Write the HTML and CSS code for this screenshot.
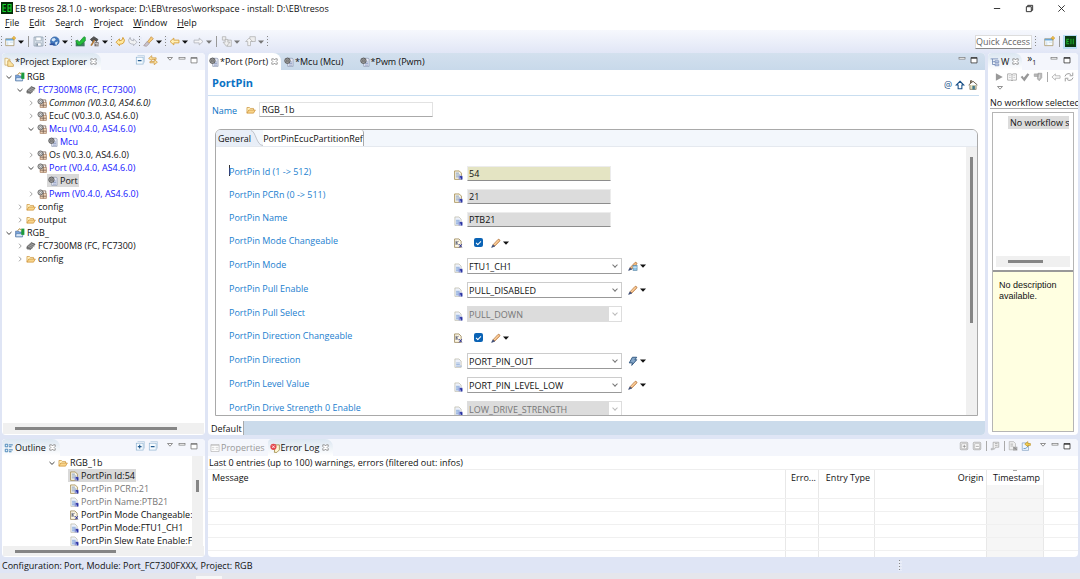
FILE: index.html
```html
<!DOCTYPE html>
<html lang="en">
<head>
<meta charset="utf-8">
<title>EB tresos 28.1.0</title>
<link rel="stylesheet" href="styles.css">
</head>
<body>
<svg class="defs" aria-hidden="true">
  <symbol id="down" viewBox="0 0 6 6"><path d="M0 1.5h6L3 4.8z" fill="currentColor"/></symbol>
  <symbol id="menu-tri" viewBox="0 0 8 8"><path d="M1.5 1.5h5L4 4.2z" fill="#fff" stroke="#777" stroke-width=".8"/></symbol>
  <symbol id="min" viewBox="0 0 8 8"><rect x="1" y="1.5" width="6" height="1.6" fill="#fff" stroke="#777" stroke-width=".7"/></symbol>
  <symbol id="max" viewBox="0 0 8 8"><path d="M1 1.5h6v5.4H1z" fill="#fff" stroke="currentColor" stroke-width=".8"/><path d="M1 2.2h6" stroke="currentColor" stroke-width="1"/></symbol>
  <symbol id="close" viewBox="0 0 10 10"><path d="M2 2h2l1 1.3L6 2h2v1.8L6.800 5 8 6.200V8H6L5 6.700 4 8H2V6.200L3.200 5 2 3.800z" fill="#fff" stroke="#777" stroke-width=".8"/></symbol>
  <symbol id="exp" viewBox="0 0 8 8"><path d="M3 1.700L5.200 4 3 6.300" fill="none" stroke="#999" stroke-width=".9"/></symbol>
  <symbol id="col" viewBox="0 0 8 8"><path d="M1.500 3L4 5.400 6.500 3" fill="none" stroke="#444" stroke-width="1"/></symbol>
  <symbol id="logo" viewBox="0 0 12 12"><rect width="12" height="12" fill="#052b08"/><path d="M5 2.500H2v7h3M2 6h3M7 2.500v7h3v-7zM7 6h3" fill="none" stroke="#16d52c" stroke-width="1.100"/></symbol>
  <symbol id="logodim" viewBox="0 0 12 12"><rect width="12" height="12" fill="#0a3a12"/><path d="M4.500 3.500H2v5h2.500M2 6h2M6.500 3v6M9 3v6" fill="none" stroke="#18b52c" stroke-width="1.100"/></symbol>
  <symbol id="explorer" viewBox="0 0 16 16"><path d="M1.500 13V2h4l1 1.500h3V13z" fill="#fff8dc" stroke="#c79b45"/><path d="M6 15V6h3l1.500 2L15 12v3z" fill="#fbe3a0" stroke="#b98a35"/></symbol>
  <symbol id="project" viewBox="0 0 16 16"><path d="M1 5h5l1 1.500h5V14H1z" fill="#7ba5dc" stroke="#3d6296"/><path d="M2 9h11l-1 5H1z" fill="#d7e6f8" stroke="#547aa9"/><rect x="10" y="1" width="5" height="10" fill="#1c9b3c"/><path d="M4 4l4-3 2 3" stroke="#b58a38" fill="none" stroke-width="1.500"/></symbol>
  <symbol id="chip" viewBox="0 0 16 16"><path d="M1.500 9l7-6.500L14.500 5l-7 8.500-6-1z" fill="#777" stroke="#444"/><path d="M3 8l6 3M5 6l6 3M7 4l6 3M3 12v2.500M6 13v2M10 11v2M13 8v2" stroke="#bbb"/></symbol>
  <symbol id="module" viewBox="0 0 16 16"><path d="M5 7h10v8H5z" fill="#efd5bd" stroke="#976846"/><path d="M10 4v11M5 11.500h10M8 3h6v4" fill="none" stroke="#6d5648" stroke-width="1.200"/><circle cx="5.500" cy="5.500" r="4" fill="#ccc" stroke="#666" stroke-width="1.500"/><circle cx="5.500" cy="5.500" r="1.500" fill="#fff" stroke="#666"/></symbol>
  <symbol id="config" viewBox="0 0 16 16"><path d="M5 2h8l1.500 1v12H6z" fill="#e6e9f5" stroke="#8390aa"/><path d="M8 8h5M8 10.500h5M8 13h5" stroke="#6b7fae"/><circle cx="5.500" cy="6" r="4.300" fill="#aaa" stroke="#555" stroke-width="1.500"/><circle cx="5.500" cy="6" r="1.500" fill="#eee" stroke="#444"/><path d="M2 2.500l7 7M9 2.500l-7 7" stroke="#666" stroke-width=".8"/></symbol>
  <symbol id="folder" viewBox="0 0 16 16"><path d="M1.500 13V4h4l1.500 1.500h5V8" fill="#fff0bd" stroke="#c5862a"/><path d="M1.500 13L4.500 8H15l-3 5z" fill="#f9d58b" stroke="#c5862a"/></symbol>
  <symbol id="doc" viewBox="0 0 16 16"><path d="M3 1.500h6.500L13 5v10H3z" fill="#edf1fa" stroke="#b5b29f"/><path d="M5 6h6v8H5z" fill="#b9cdec"/><path d="M5 7h5M5 9.500h5M5 12h4" stroke="#8eabd8"/><path d="M9 9h6v6H9z" fill="#8d97d8"/><path d="M11 11h3v4" stroke="#1c249a" stroke-width="1.800" fill="none"/></symbol>
  <symbol id="docplain" viewBox="0 0 16 16"><path d="M3 1.500h6.500L13 5v10H3z" fill="#edf1fa" stroke="#b5b29f"/><path d="M5 8h6M5 10.500h6M5 13h9" stroke="#8eabd8" stroke-width="1.300"/></symbol>
  <symbol id="docnum" viewBox="0 0 16 16"><path d="M2.500 1.500h7.500L13.500 5v10h-11z" fill="#f7f3e5" stroke="#a58c50" stroke-width="1.300"/><path d="M4.500 5h5M4.500 8h7M4.500 11h5" stroke="#7390bd" stroke-width="1.300"/><path d="M9 9h6v6H9z" fill="#8d97d8"/><path d="M11 11h3v4" stroke="#1c249a" stroke-width="1.800" fill="none"/></symbol>
  <symbol id="docbool" viewBox="0 0 16 16"><path d="M2.500 1.500h7L13 5v10H2.500z" fill="#fff9e7" stroke="#998558" stroke-width="1.300"/><path d="M5 4.500v6.500M9 4.500L5.500 8 9 11" stroke="#434b69" stroke-width="1.400" fill="none"/><path d="M10 10l4 5M14 10l-4 5" stroke="#1c249a" stroke-width="1.500" fill="none"/></symbol>
  <symbol id="pencil" viewBox="0 0 16 16"><path d="M3 11L11 2.500q2-1.500 3 .5t-.5 2.500L6 13z" fill="#f3bb80" stroke="#a5652d"/><path d="M4.500 11.500L12 3.500" stroke="#ffe1b8"/><path d="M1 15l2-4 3 2z" fill="#34446e" stroke="#34446e"/></symbol>
  <symbol id="pencalc" viewBox="0 0 16 16"><path d="M3 11L11 2.500q2-1.500 3 .5t-.5 2.500L6 13z" fill="#f3bb80" stroke="#a5652d"/><path d="M1 15l2-4 3 2z" fill="#34446e" stroke="#34446e"/><rect x="8" y="7" width="6.500" height="8" fill="#8fc6e8" stroke="#5683a3"/><path d="M8 10h6" stroke="#fff"/></symbol>
  <symbol id="bolt" viewBox="0 0 16 16"><path d="M7 2h7l-3 4h3l-8 9 1-4H2z" fill="#84a6c8" stroke="#2f557f" stroke-width="1.500"/></symbol>
  <symbol id="new" viewBox="0 0 16 16"><path d="M1 4h12v10H1z" fill="#f5fbff" stroke="#a08a55"/><path d="M1 4h12v2.500H1z" fill="#6aa7d8"/><path d="M4 8v5M7 9h5" stroke="#bdd1df"/><path d="M13 0l1 2 2 1-2 1-1 2-1-2-2-1 2-1z" fill="#f6bd31" stroke="#bd8413" stroke-width=".6"/></symbol>
  <symbol id="save" viewBox="0 0 16 16"><path d="M1.500 1.500h13v13h-13z" fill="#dfe7ef" stroke="#8394a5"/><path d="M4 1.500h8V7H4zM4 10h8v4.500H4z" fill="#fff" stroke="#8fa1b2"/><path d="M6 11v3" stroke="#657789" stroke-width="2"/></symbol>
  <symbol id="globe" viewBox="0 0 16 16"><circle cx="8.500" cy="7.500" r="6.200" fill="#4379be" stroke="#24599d"/><path d="M4 4l4-1 2 2-3 3-3-1zM9 9l4-1-2 5-2-1z" fill="#d6e8f8"/><path d="M1 12h7" stroke="#2f529d" stroke-width="2.500"/></symbol>
  <symbol id="verify" viewBox="0 0 16 16"><path d="M1 9h13v6H1z" fill="#3f7962"/><path d="M1 7l3-1 2 3 7-8 2 1v5l-7 6H4z" fill="#24be3b" stroke="#148729"/></symbol>
  <symbol id="hammer" viewBox="0 0 16 16"><path d="M2 5l5-4 6 4-2 3-3-2-3 2z" fill="#555" stroke="#333"/><path d="M8 6L3 14" stroke="#b07838" stroke-width="2.500"/><path d="M8 9h6v6H8z" fill="#716765"/><path d="M9 11h4M10 13h4" stroke="#fff"/></symbol>
  <symbol id="undo" viewBox="0 0 16 16"><path d="M1.500 9l5-5v3q5 0 5-5 4 4 1 8-2 2-6 2v2z" fill="#ffe9a0" stroke="#d3992f" stroke-width="1.300"/></symbol>
  <symbol id="redo" viewBox="0 0 16 16"><path d="M14.500 9l-5-5v3q-5 0-5-5-4 4-1 8 2 2 6 2v2z" fill="#f0f1f3" stroke="#b0b4bd" stroke-width="1.300"/></symbol>
  <symbol id="brush" viewBox="0 0 16 16"><path d="M6 9l6-8 3 3-7 7z" fill="#f7cc7a" stroke="#bd8538"/><path d="M1 14l5-6 3 3-4 4z" fill="#c7c2cf" stroke="#a08f8c"/></symbol>
  <symbol id="back" viewBox="0 0 16 16"><path d="M1.500 8L7 3v3h7.500v4H7v3z" fill="#fff0b7" stroke="#d3992f" stroke-width="1.200"/></symbol>
  <symbol id="fwd" viewBox="0 0 16 16"><path d="M14.500 8L9 3v3H1.500v4H9v3z" fill="#f5f5f7" stroke="#b1b4bb" stroke-width="1.200"/></symbol>
  <symbol id="backgrey" viewBox="0 0 16 16"><path d="M1.500 8L7 3v3h7.500v4H7v3z" fill="#fafafa" stroke="#aaa" stroke-width="1.200"/></symbol>
  <symbol id="annotation" viewBox="0 0 16 16"><path d="M2 1h5v5H2zM9 6h6v9H9z" fill="#eee" stroke="#aaa"/><path d="M6 5h4v4h3l-5 6-5-6h3z" fill="#eee" stroke="#aaa"/></symbol>
  <symbol id="annup" viewBox="0 0 16 16"><path d="M7 1h8v7H7z" fill="#eee" stroke="#aaa"/><path d="M6 3l5 5H8v6H4V8H1z" fill="#f5f5f5" stroke="#aaa"/></symbol>
  <symbol id="collapse" viewBox="0 0 16 16"><path d="M4 1h11v11" fill="none" stroke="#a3c1d8"/><rect x="2" y="3.500" width="11" height="11" fill="#f7fcff" stroke="#85adcd"/><path d="M4.500 9h6" stroke="#225a8f" stroke-width="1.800"/></symbol>
  <symbol id="expand" viewBox="0 0 16 16"><path d="M4 1h11v11" fill="none" stroke="#a3c1d8"/><rect x="2" y="3.500" width="11" height="11" fill="#f7fcff" stroke="#85adcd"/><path d="M4.500 9h6M7.500 6v6" stroke="#225a8f" stroke-width="1.800"/></symbol>
  <symbol id="greyplus" viewBox="0 0 16 16"><rect x="2" y="2" width="12" height="12" rx="1.500" fill="#eee" stroke="#999"/><rect x="4.500" y="4.500" width="8" height="8" fill="#fff" stroke="#aaa"/><path d="M6 8.500h5M8.500 6v5" stroke="#777"/></symbol>
  <symbol id="greyminus" viewBox="0 0 16 16"><rect x="2" y="2" width="12" height="12" rx="1.500" fill="#eee" stroke="#999"/><rect x="4.500" y="4.500" width="8" height="8" fill="#fff" stroke="#aaa"/><path d="M6 8.500h5" stroke="#777"/></symbol>
  <symbol id="link" viewBox="0 0 16 16"><path d="M13 4.500H6V1L1 5.500 6 9V7h7zM3 10.500h7V7l5 4.500-5 4v-3H3z" fill="#fbe2a1" stroke="#c58a2a"/></symbol>
  <symbol id="outline" viewBox="0 0 16 16"><path d="M2 2h4v4H2zM2 10h4v4H2z" fill="#e7f4ff" stroke="#3476ad" stroke-width="1.300"/><path d="M8 3h6M8 6h4M8 11h6M8 14h4" stroke="#3476ad" stroke-width="1.500"/></symbol>
  <symbol id="flow" viewBox="0 0 16 16"><path d="M1 3h12M4 3v9h4M4 7.500h4" stroke="#667fae" fill="none" stroke-width="1.200"/><path d="M8 6h6v3H8zM8 11h6v3H8z" fill="#c8d4ee" stroke="#667fae"/></symbol>
  <symbol id="props" viewBox="0 0 16 16"><path d="M1.500 2.500h13v11h-13z" fill="#fff" stroke="#aaa"/><path d="M1.500 4h13M3 7h4M9 7h4M3 10h4M9 10h4" stroke="#bbb"/></symbol>
  <symbol id="error" viewBox="0 0 16 16"><path d="M8 3h7v8l-4 4H7z" fill="#fff7d4" stroke="#9c8742" stroke-width="1.300"/><circle cx="5.500" cy="6" r="5" fill="#e24a50"/><path d="M3.500 4l4 4M7.500 4l-4 4" stroke="#fff" stroke-width="1.300"/></symbol>
  <symbol id="home" viewBox="0 0 16 16"><path d="M3 8v7h10V8" fill="#e5dfbd" stroke="#695d45"/><path d="M1 8l7-6 7 6M4 5V1h2v3" fill="none" stroke="#6f6250" stroke-width="1.600"/><path d="M7 9h4v6H7z" fill="#447a8c"/></symbol>
  <symbol id="up" viewBox="0 0 16 16"><path d="M8 2l6 6h-3v6H5V8H2z" fill="#fff" stroke="#174f87" stroke-width="1.700"/></symbol>
  <symbol id="play" viewBox="0 0 16 16"><path d="M3 2l11 6-11 6z" fill="#999"/></symbol>
  <symbol id="book" viewBox="0 0 16 16"><path d="M1 3h5l2 1 2-1h5v10h-5l-2 1-2-1H1zM8 4v10" fill="#fff" stroke="#999" stroke-width="1.200"/><path d="M3 6h3M10 6h3M3 9h3M10 9h3" stroke="#aaa"/></symbol>
  <symbol id="tick" viewBox="0 0 16 16"><path d="M1 8l3-2 2 3 6-7 3 2-8 11z" fill="#999"/></symbol>
  <symbol id="drop" viewBox="0 0 16 16"><path d="M2 3h7v4H2zM8 2h6v7l-4 5-3-3z" fill="#bbb" stroke="#999"/><path d="M10 4v6" stroke="#fff"/></symbol>
  <symbol id="refresh" viewBox="0 0 16 16"><path d="M1.500 7Q3 2 8 2.500l3 1.500M14 1v5H9M14.500 9Q13 14 8 13.500L5 12M2 15v-5h5" fill="none" stroke="#999" stroke-width="1.500"/></symbol>
  <symbol id="export" viewBox="0 0 16 16"><path d="M5 2h9v8H9l-2 3H5z" fill="#eee" stroke="#999"/><path d="M8 4h4M8 7h4M1 13h4M3 11v4" stroke="#999"/></symbol>
  <symbol id="greydoc" viewBox="0 0 16 16"><path d="M2 1h7l3 3v10H2z" fill="#eee" stroke="#aaa"/><path d="M4 5h4M4 8h4" stroke="#aaa" stroke-width="1.300"/><path d="M8 9h7v6H8z" fill="#aaa"/><path d="M9 10l5 4" stroke="#777"/></symbol>
  <symbol id="restorelog" viewBox="0 0 16 16"><path d="M2 3h8l2 2v10H2z" fill="#edf6ff" stroke="#7998bb"/><path d="M4 12q6 1 7-5" fill="none" stroke="#6d9dcc" stroke-width="1.500"/><path d="M15 4h-4V1L6 5l5 4V7h4z" fill="#f5cf51" stroke="#b68b1e"/></symbol>
</svg>

<header class="titlebar">
  <svg class="i12"><use href="#logo"/></svg>
  <h1>EB tresos 28.1.0 - workspace: D:\EB\tresos\workspace - install: D:\EB\tresos</h1>
  <button class="win" aria-label="Minimize"><svg viewBox="0 0 10 10"><path d="M1 5h7" stroke="#222" fill="none"/></svg></button>
  <button class="win" aria-label="Restore"><svg viewBox="0 0 10 10"><path d="M1.500 3h5.500v5.500H1.500zM3 3V1.500h5.500V7H7" stroke="#222" fill="none"/></svg></button>
  <button class="win" aria-label="Close"><svg viewBox="0 0 10 10"><path d="M1.500 1.500l7 7M8.500 1.500l-7 7" stroke="#222" fill="none"/></svg></button>
</header>
<nav class="menubar">
  <button><u>F</u>ile</button><button><u>E</u>dit</button><button>Se<u>a</u>rch</button><button><u>P</u>roject</button><button><u>W</u>indow</button><button><u>H</u>elp</button>
</nav>
<div class="toolbar">
  <i class="grip"></i>
  <button class="tool" aria-label="New"><svg><use href="#new"/></svg></button><button class="drop" aria-label="New options"><svg><use href="#down"/></svg></button>
  <i class="sep"></i>
  <button class="tool" aria-label="Save"><svg><use href="#save"/></svg></button>
  <i class="grip"></i>
  <button class="tool" aria-label="Open"><svg><use href="#globe"/></svg></button><button class="drop" aria-label="Open options"><svg><use href="#down"/></svg></button>
  <i class="grip"></i>
  <button class="tool" aria-label="Verify"><svg><use href="#verify"/></svg></button><button class="tool wide" aria-label="Generate"><svg><use href="#hammer"/></svg></button><button class="drop" aria-label="Generate options"><svg><use href="#down"/></svg></button>
  <i class="grip"></i>
  <button class="tool" aria-label="Undo"><svg><use href="#undo"/></svg></button><button class="tool" aria-label="Redo"><svg><use href="#redo"/></svg></button>
  <i class="grip"></i>
  <button class="tool" aria-label="Search"><svg><use href="#brush"/></svg></button><button class="drop" aria-label="Search options"><svg><use href="#down"/></svg></button>
  <i class="grip"></i>
  <button class="tool" aria-label="Back"><svg><use href="#back"/></svg></button><button class="drop" aria-label="Back options"><svg><use href="#down"/></svg></button>
  <button class="tool wide" aria-label="Forward"><svg><use href="#fwd"/></svg></button><button class="drop dim" aria-label="Forward options"><svg><use href="#down"/></svg></button>
  <i class="sep"></i>
  <button class="tool" aria-label="Next annotation"><svg><use href="#annotation"/></svg></button><button class="drop dim" aria-label="Next options"><svg><use href="#down"/></svg></button>
  <button class="tool wide" aria-label="Previous annotation"><svg><use href="#annup"/></svg></button><button class="drop dim" aria-label="Previous options"><svg><use href="#down"/></svg></button>
  <i class="grip"></i>
  <div class="perspective">
    <input class="quick" type="text" aria-label="Quick Access" placeholder="Quick Access">
    <i class="grip"></i>
    <button class="tool open" aria-label="Open perspective"><svg><use href="#new"/></svg></button>
    <i class="sep"></i>
    <button class="tool active" aria-label="EB tresos perspective"><svg><use href="#logodim"/></svg></button>
  </div>
</div>

<main class="workbench">
  <section class="pane explorer">
    <div class="head">
      <div class="tab on"><svg class="ic"><use href="#explorer"/></svg><span>*Project Explorer</span><svg class="x"><use href="#close"/></svg></div>
      <div class="acts"><svg class="ic"><use href="#collapse"/></svg><svg class="ic gap-r"><use href="#link"/></svg><svg class="wb"><use href="#menu-tri"/></svg><svg class="wb"><use href="#min"/></svg><svg class="wb"><use href="#max"/></svg></div>
    </div>
    <ul class="tree">
      <li class="l0"><svg class="tw"><use href="#col"/></svg><svg class="ic"><use href="#project"/></svg><span>RGB</span></li>
      <li class="l1 blue"><svg class="tw"><use href="#col"/></svg><svg class="ic"><use href="#chip"/></svg><span>FC7300M8 (FC, FC7300)</span></li>
      <li class="l2 ital"><svg class="tw"><use href="#exp"/></svg><svg class="ic"><use href="#module"/></svg><span>Common (V0.3.0, AS4.6.0)</span></li>
      <li class="l2"><svg class="tw"><use href="#exp"/></svg><svg class="ic"><use href="#module"/></svg><span>EcuC (V0.3.0, AS4.6.0)</span></li>
      <li class="l2 blue"><svg class="tw"><use href="#col"/></svg><svg class="ic"><use href="#module"/></svg><span>Mcu (V0.4.0, AS4.6.0)</span></li>
      <li class="l3 blue"><span class="node"><svg class="ic"><use href="#config"/></svg><span>Mcu</span></span></li>
      <li class="l2"><svg class="tw"><use href="#exp"/></svg><svg class="ic"><use href="#module"/></svg><span>Os (V0.3.0, AS4.6.0)</span></li>
      <li class="l2 blue"><svg class="tw"><use href="#col"/></svg><svg class="ic"><use href="#module"/></svg><span>Port (V0.4.0, AS4.6.0)</span></li>
      <li class="l3"><span class="node sel"><svg class="ic"><use href="#config"/></svg><span>Port</span></span></li>
      <li class="l2 blue"><svg class="tw"><use href="#exp"/></svg><svg class="ic"><use href="#module"/></svg><span>Pwm (V0.4.0, AS4.6.0)</span></li>
      <li class="l1"><svg class="tw"><use href="#exp"/></svg><svg class="ic"><use href="#folder"/></svg><span>config</span></li>
      <li class="l1"><svg class="tw"><use href="#exp"/></svg><svg class="ic"><use href="#folder"/></svg><span>output</span></li>
      <li class="l0"><svg class="tw"><use href="#col"/></svg><svg class="ic"><use href="#project"/></svg><span>RGB_</span></li>
      <li class="l1"><svg class="tw"><use href="#exp"/></svg><svg class="ic"><use href="#chip"/></svg><span>FC7300M8 (FC, FC7300)</span></li>
      <li class="l1"><svg class="tw"><use href="#exp"/></svg><svg class="ic"><use href="#folder"/></svg><span>config</span></li>
    </ul>
    <div class="hbar"><i class="long"></i></div>
  </section>

  <section class="pane editor">
    <div class="head edhead">
      <div class="tab on"><svg class="ic"><use href="#config"/></svg><span>*Port (Port)</span><svg class="x"><use href="#close"/></svg></div>
      <div class="tab second"><svg class="ic"><use href="#config"/></svg><span>*Mcu (Mcu)</span></div>
      <div class="tab"><svg class="ic"><use href="#config"/></svg><span>*Pwm (Pwm)</span></div>
      <div class="acts"><svg class="wb"><use href="#min"/></svg><svg class="wb dark"><use href="#max"/></svg></div>
    </div>
    <div class="formhead">
      <h2>PortPin</h2>
      <span class="at">@</span><svg class="ic"><use href="#up"/></svg><svg class="ic"><use href="#home"/></svg>
    </div>
    <div class="name">
      <label for="name">Name</label><svg class="ic"><use href="#folder"/></svg><input id="name" type="text" value="RGB_1b">
    </div>
    <div class="folder">
      <div class="ftabs">
        <button class="ft on">General</button><svg class="curve" viewBox="0 0 20 16" preserveAspectRatio="none"><path d="M0 .5C8 1 9 15.500 20 15.500L0 16z" fill="#e8eef7"/><path d="M0 .5C8 1 9 15.500 20 15.500" fill="none" stroke="#b5b8be"/></svg><button class="ft part">PortPinEcucPartitionRef</button>
      </div>
      <div class="fbody">
        <div class="fields">
          <div class="row t"><label for="f1" class="caret">PortPin Id (1 -&gt; 512)</label><svg class="ic"><use href="#docnum"/></svg><input id="f1" class="olive" type="text" value="54"></div>
          <div class="row t"><label for="f2">PortPin PCRn (0 -&gt; 511)</label><svg class="ic"><use href="#docnum"/></svg><input id="f2" type="text" value="21" readonly></div>
          <div class="row t"><label for="f3">PortPin Name</label><svg class="ic"><use href="#doc"/></svg><input id="f3" type="text" value="PTB21" readonly></div>
          <div class="row t check"><label for="f4">PortPin Mode Changeable</label><svg class="ic"><use href="#docbool"/></svg><input id="f4" type="checkbox" checked><button class="edit" aria-label="Edit mode changeable"><svg class="ic"><use href="#pencil"/></svg><svg class="dn"><use href="#down"/></svg></button></div>
          <div class="row"><label for="f5">PortPin Mode</label><svg class="ic"><use href="#doc"/></svg><span class="combo"><select id="f5"><option>FTU1_CH1</option></select></span><button class="edit" aria-label="Edit mode"><svg class="ic"><use href="#pencalc"/></svg><svg class="dn"><use href="#down"/></svg></button></div>
          <div class="row"><label for="f6">PortPin Pull Enable</label><svg class="ic"><use href="#doc"/></svg><span class="combo"><select id="f6"><option>PULL_DISABLED</option></select></span><button class="edit" aria-label="Edit pull enable"><svg class="ic"><use href="#pencil"/></svg><svg class="dn"><use href="#down"/></svg></button></div>
          <div class="row"><label for="f7">PortPin Pull Select</label><svg class="ic"><use href="#doc"/></svg><span class="combo off"><select id="f7" disabled><option>PULL_DOWN</option></select></span></div>
          <div class="row t check"><label for="f8">PortPin Direction Changeable</label><svg class="ic"><use href="#docbool"/></svg><input id="f8" type="checkbox" checked><button class="edit" aria-label="Edit direction changeable"><svg class="ic"><use href="#pencil"/></svg><svg class="dn"><use href="#down"/></svg></button></div>
          <div class="row"><label for="f9">PortPin Direction</label><svg class="ic"><use href="#docplain"/></svg><span class="combo"><select id="f9"><option>PORT_PIN_OUT</option></select></span><button class="edit" aria-label="Edit direction"><svg class="ic"><use href="#bolt"/></svg><svg class="dn"><use href="#down"/></svg></button></div>
          <div class="row"><label for="f10">PortPin Level Value</label><svg class="ic"><use href="#doc"/></svg><span class="combo"><select id="f10"><option>PORT_PIN_LEVEL_LOW</option></select></span><button class="edit" aria-label="Edit level value"><svg class="ic"><use href="#pencil"/></svg><svg class="dn"><use href="#down"/></svg></button></div>
          <div class="row"><label for="f11">PortPin Drive Strength 0 Enable</label><svg class="ic"><use href="#doc"/></svg><span class="combo off"><select id="f11" disabled><option>LOW_DRIVE_STRENGTH</option></select></span></div>
        </div>
        <div class="vbar"><i></i></div>
      </div>
    </div>
    <div class="pages"><button>Default</button></div>
  </section>

  <section class="pane workflow">
    <div class="head">
      <div class="tab on"><svg class="ic"><use href="#flow"/></svg><span>W</span><svg class="x"><use href="#close"/></svg></div>
      <span class="more">»<sub>1</sub></span>
      <div class="acts"><svg class="wb"><use href="#min"/></svg><svg class="wb dark"><use href="#max"/></svg></div>
    </div>
    <div class="wtools"><svg class="ic"><use href="#play"/></svg><svg class="ic"><use href="#book"/></svg><svg class="ic"><use href="#tick"/></svg><svg class="ic"><use href="#drop"/></svg><i class="line"></i><svg class="ic"><use href="#backgrey"/></svg><svg class="ic"><use href="#refresh"/></svg></div>
    <svg class="wb wmenu"><use href="#menu-tri"/></svg>
    <p class="wlabel">No workflow selected</p>
    <div class="wbox">
      <div class="wtree"><span>No workflow selected</span></div>
      <div class="hbar"><i></i></div>
      <p class="desc">No description available.</p>
    </div>
  </section>

  <section class="pane outline">
    <div class="head">
      <div class="tab on"><svg class="ic"><use href="#outline"/></svg><span>Outline</span><svg class="x"><use href="#close"/></svg></div>
      <div class="acts"><svg class="ic"><use href="#expand"/></svg><svg class="ic gap-r"><use href="#collapse"/></svg><svg class="wb"><use href="#menu-tri"/></svg><svg class="wb"><use href="#min"/></svg><svg class="wb"><use href="#max"/></svg></div>
    </div>
    <div class="obody">
      <ul class="tree">
        <li class="o0"><svg class="tw"><use href="#col"/></svg><svg class="ic"><use href="#folder"/></svg><span>RGB_1b</span></li>
        <li class="o1"><span class="node sel"><svg class="ic"><use href="#docnum"/></svg><span>PortPin Id:54</span></span></li>
        <li class="o1 grey"><span class="node"><svg class="ic"><use href="#docnum"/></svg><span>PortPin PCRn:21</span></span></li>
        <li class="o1 grey"><span class="node"><svg class="ic"><use href="#doc"/></svg><span>PortPin Name:PTB21</span></span></li>
        <li class="o1"><span class="node"><svg class="ic"><use href="#docbool"/></svg><span>PortPin Mode Changeable:</span></span></li>
        <li class="o1"><span class="node"><svg class="ic"><use href="#doc"/></svg><span>PortPin Mode:FTU1_CH1</span></span></li>
        <li class="o1"><span class="node"><svg class="ic"><use href="#doc"/></svg><span>PortPin Slew Rate Enable:FA</span></span></li>
      </ul>
      <div class="ovbar"><i></i></div>
    </div>
    <div class="hbar"><i class="mid"></i></div>
  </section>

  <section class="pane log">
    <div class="head">
      <div class="tab faded"><svg class="ic"><use href="#props"/></svg><span>Properties</span></div>
      <div class="tab on"><svg class="ic"><use href="#error"/></svg><span>Error Log</span><svg class="x"><use href="#close"/></svg></div>
      <div class="acts"><svg class="ic"><use href="#greyplus"/></svg><svg class="ic"><use href="#greyminus"/></svg><i class="line"></i><svg class="ic"><use href="#export"/></svg><i class="line"></i><svg class="ic"><use href="#greydoc"/></svg><svg class="ic gap-r"><use href="#restorelog"/></svg><svg class="wb"><use href="#menu-tri"/></svg><svg class="wb"><use href="#min"/></svg><svg class="wb dark"><use href="#max"/></svg></div>
    </div>
    <p class="summary">Last 0 entries (up to 100) warnings, errors (filtered out: infos)</p>
    <table>
      <colgroup><col><col class="c2"><col class="c3"><col class="c4"><col class="c5"><col class="c6"></colgroup>
      <thead><tr><th>Message</th><th>Erro...</th><th>Entry Type</th><th class="right">Origin</th><th class="sorted">Timestamp</th><th></th></tr></thead>
      <tbody>
        <tr><td></td><td></td><td></td><td></td><td></td><td></td></tr>
        <tr><td></td><td></td><td></td><td></td><td></td><td></td></tr>
        <tr><td></td><td></td><td></td><td></td><td></td><td></td></tr>
        <tr><td></td><td></td><td></td><td></td><td></td><td></td></tr>
        <tr><td></td><td></td><td></td><td></td><td></td><td></td></tr>
        <tr><td></td><td></td><td></td><td></td><td></td><td></td></tr>
      </tbody>
    </table>
  </section>
</main>
<footer class="status"><span>Configuration: Port, Module: Port_FC7300FXXX, Project: RGB</span><i class="grip"></i></footer>
<div class="taskbar"><i></i></div>
</body>
</html>
```

FILE: styles.css
```css
* { box-sizing: border-box; }
body {
  margin: 0;
  height: 100vh;
  display: flex;
  flex-direction: column;
  overflow: hidden;
  background: #dfe5f5;
  color: #111;
  font: 9px/13px "Open Sans", "Noto Sans", sans-serif;
}
h1, h2, p, ul { margin: 0; padding: 0; font-size: inherit; font-weight: normal; }
ul { list-style: none; }
button, input, select { font: inherit; color: inherit; margin: 0; padding: 0; border: 0; background: none; }
svg { flex: none; display: block; }
.defs { position: absolute; width: 0; height: 0; }
.ic { width: 10px; height: 10px; }
.x { width: 9px; height: 9px; }
.wb { width: 8px; height: 8px; color: #777; }
.dark { color: #333; }
.tw { width: 8px; height: 8px; margin-right: 2px; }
.i12 { width: 12px; height: 12px; }

.titlebar { display: flex; align-items: center; height: 16px; flex: none; background: #fff; padding: 0 9px 0 1px; gap: 2px; }
.titlebar h1 { flex: 1; white-space: nowrap; }
.win { width: 20px; height: 14px; margin-left: 10px; display: flex; align-items: center; justify-content: center; }
.win svg { width: 9px; height: 9px; }
.menubar { display: flex; gap: 10px; height: 14px; flex: none; background: #fff; padding-left: 5px; }
.menubar button { line-height: 14px; }
.toolbar { display: flex; align-items: center; height: 23px; flex: none; background: linear-gradient(#f6f8fd, #e1e6f6); }
.grip { flex: none; width: 4px; height: 11px; background: repeating-linear-gradient(transparent 0 1px, #e9edf8 1px 3px), linear-gradient(90deg, transparent 1px, #888 1px 2px, transparent 2px); }
.sep { flex: none; width: 6px; height: 11px; background: linear-gradient(90deg, transparent 2px, #999 2px, #999 3px, transparent 3px); }
.tool { width: 12px; height: 14px; display: flex; align-items: center; justify-content: center; flex: none; }
.tool svg { width: 11px; height: 11px; }
.tool.wide { margin-left: 2px; }
.drop { width: 10px; height: 14px; display: flex; align-items: center; justify-content: center; color: #111; }
.drop svg { width: 6px; height: 6px; }
.drop.dim { color: #777; }
.perspective { margin-left: auto; display: flex; align-items: center; gap: 2px; padding-right: 3px; }
.quick { width: 57px; height: 14px; background: #fff; border: 1px solid #ddd; border-bottom-color: #888; padding: 0; }
.quick::placeholder { color: #666; opacity: 1; }
.perspective .sep { width: 4px; }
.tool.open { margin-left: 3px; }
.tool.active { width: 14px; background: #b9dcf5; }

.workbench { flex: 1; min-height: 0; display: grid; grid-template-columns: 203px minmax(0, 1fr) 90px; grid-template-rows: minmax(0, 1fr) 118px; gap: 4px 3px; padding: 0 2px 0 2px; }
.pane { background: #fff; border-radius: 4px; min-width: 0; min-height: 0; overflow: hidden; display: flex; flex-direction: column; }
.log { grid-column: 2 / 4; }
.head { display: flex; height: 17px; flex: none; background: #f4f6fc; }
.tab { display: flex; align-items: center; gap: 1px; padding: 0 3px 0 2px; white-space: nowrap; border-radius: 4px 8px 0 0; }
.tab .x { margin-left: 1px; }
.tab.on { background: linear-gradient(#dbe6f1, #fff); }
.acts { margin-left: auto; display: flex; align-items: center; gap: 4px; padding: 0 7px 3px 0; }
.gap-r { margin-right: 4px; }
.acts .ic { margin-left: -1px; }

.tree { flex: 1; min-height: 0; overflow: hidden; }
.tree li { height: 13px; display: flex; align-items: center; white-space: nowrap; }
.tree .ic { margin-right: 2px; }
.l0 { padding-left: 3px; }
.l1 { padding-left: 14px; }
.l2 { padding-left: 25px; }
.l3 { padding-left: 45px; }
.o0 { padding-left: 46px; }
.o1 { padding-left: 66px; }
.node { display: flex; align-items: center; padding: 0 1px; }
.sel { background: #d9d9d9; }
.blue { color: #1414ff; }
.ital { font-style: italic; }
.grey { color: #777; }
.hbar { flex: none; height: 11px; margin: 0 1px 1px; background: #f0f0f0; display: flex; align-items: center; padding-left: 12px; }
.hbar i { width: 35px; height: 3px; background: #858585; }
.hbar .long { width: 162px; }
.hbar .mid { width: 101px; }

.editor .head { background: linear-gradient(#d3e0ee, #c8d9ea); }
.editor .tab.on { background: #fff; padding-right: 2px; }
.editor .tab { padding-left: 1px; }
.editor .second { padding-right: 15px; padding-left: 3px; }
.formhead { display: flex; align-items: center; gap: 3px; height: 26px; flex: none; padding: 0 1px 0 4px; border-bottom: 1px solid #c9def0; margin-right: 6px; }
.formhead h2 { flex: 1; color: #0b72c4; font-size: 11px; font-weight: bold; }
.formhead .ic { margin-top: 5px; }
.at { color: #174f87; padding-top: 4px; }
.name { display: flex; align-items: center; height: 28px; flex: none; padding-left: 4px; color: #0b72c4; }
.name label { width: 34px; }
.name input { color: #111; width: 174px; height: 15px; margin: 0 0 2px 3px; padding-left: 2px; border: 1px solid #e2e2e2; border-bottom-color: #aaa; }
.folder { flex: 1; min-height: 0; margin: 5px 7px 0 7px; border: 1px solid #a9a9a9; border-radius: 6px 6px 0 0; display: flex; flex-direction: column; overflow: hidden; }
.ftabs { display: flex; height: 17px; flex: none; background: #f3f7fc; border-bottom: 1px solid #e5e9ef; }
.ft { padding: 0 0 0 2px; white-space: nowrap; }
.ft.on { background: #e8eef7; }
.curve { width: 12px; height: 16px; }
.ft.part { padding: 0; border-right: 1px solid #aaa; border-radius: 0 3px 0 0; background: #fff; }
.fbody { flex: 1; min-height: 0; display: flex; overflow: hidden; }
.fields { flex: 1; padding: 15px 0 0 13px; }
.row { display: flex; align-items: center; height: 24px; }
.row.t { height: 23px; }
.row label { width: 224px; padding-bottom: 4px; color: #1c80cf; }
.row label.caret { background: linear-gradient(#333, #333) 0 0 / 1px 11px no-repeat; }
.row > .ic { margin: 3px 4px 0 0; }
.row.check > .ic { margin-top: 0; }
.row input[type="text"] { width: 144px; height: 15px; padding-left: 1px; background: #dcdcdc; border: 1px solid #ececec; border-bottom-color: #8d8d8d; }
.row input[type="text"].olive { background: #e4e4c3; }
.row input[type="checkbox"] { appearance: none; width: 9px; height: 9px; margin: 0 8px 0 7px; border-radius: 2px; background: #0a63b5; display: grid; place-items: center; }
.row input[type="checkbox"]::after { content: ""; width: 4px; height: 2px; border: solid #fff; border-width: 0 0 1px 1px; rotate: -45deg; }
.combo { position: relative; display: flex; width: 155px; height: 16px; margin-right: 6px; border: 1px solid #ccc; border-bottom-color: #999; }
.combo select { appearance: none; width: 100%; padding-left: 1px; }
.combo::after { content: ""; position: absolute; right: 4px; top: 4px; width: 3px; height: 3px; border: solid #777; border-width: 0 1px 1px 0; rotate: 45deg; }
.combo.off { border-color: #ddd; }
.combo.off select { color: #777; opacity: 1; background: #dcdcdc; border-right: 12px solid #fff; }
.combo.off::after { border-color: #bbb; }
.edit { display: flex; align-items: center; gap: 2px; }
.dn { width: 6px; height: 6px; color: #111; }
.vbar { width: 11px; background: #f0f0f0; padding: 10px 4px 0; }
.vbar i { display: block; height: 166px; width: 3px; background: #858585; }
.pages { flex: none; height: 14px; margin-top: 5px; background: #cbdbeb; display: flex; }
.pages button { background: #fff; padding: 0 1px 0 3px; border-right: 1px solid #aaa; }

.workflow .tab { padding-right: 2px; }
.more { padding-left: 5px; font-size: 10px; line-height: 11px; }
.more sub { font-size: 7px; line-height: 1px; }
.workflow .acts { padding-right: 7px; gap: 5px; }
.wtools { display: flex; justify-content: space-between; padding: 2px 4px 0 6px; }
.line { width: 1px; height: 10px; background: #aaa; }
.wmenu { margin: 3px 0 0 8px; }
.wlabel { flex: none; margin: 3px 0 3px 2px; white-space: nowrap; overflow: hidden; height: 13px; border-bottom: 1px solid #aaa; }
.wbox { flex: 1; min-height: 0; margin: 0 4px 3px; border: 1px solid #b5b5b5; display: flex; flex-direction: column; }
.wtree { flex: none; height: 143px; padding: 3px 4px 0 15px; }
.wtree span { display: block; overflow: hidden; white-space: nowrap; background: #dcdcdc; padding-left: 2px; }
.workflow .hbar { margin: 0 3px 3px; }
.desc { flex: 1; background: #ffffe1; border-top: 2px solid #999; padding: 8px 6px; font: 9px/11px "Liberation Sans", sans-serif; }

.obody { flex: 1; min-height: 0; display: flex; }
.outline .hbar { height: 10px; }
.outline .tree { width: 190px; flex: none; }
.ovbar { width: 11px; background: #f0f0f0; padding: 24px 4px 0; }
.ovbar i { display: block; width: 3px; height: 12px; background: #858585; }
.faded { color: #999; }
.log .tab { padding-right: 3px; }
.summary { flex: none; padding-left: 1px; height: 14px; border-bottom: 1px solid #eee; }
table { width: 100%; table-layout: fixed; border-collapse: collapse; }
.c2 { width: 33px; }
.c3 { width: 56px; }
.c4 { width: 112px; }
.c5 { width: 57px; background: #f6f6f6; }
.c6 { width: 35px; }
th { height: 15px; padding: 0; padding-left: 4px; font-weight: normal; text-align: center; white-space: nowrap; background: #fff; border-right: 1px solid #e8e8e8; }
th:first-child { text-align: left; }
th.right { text-align: right; padding-right: 2px; }
th.sorted { background: linear-gradient(#aaa, #aaa) 50% 0 / 4px 1px no-repeat #fff; }
td { height: 13px; padding: 0; border-right: 1px solid #e8e8e8; border-bottom: 1px solid #f0f0f0; }
th:last-child, td:last-child { border-right: 0; }
.status { flex: none; height: 16px; line-height: 15px; padding: 1px 178px 0 2px; display: flex; align-items: center; justify-content: space-between; }
.taskbar { flex: none; height: 6px; background: #e5e6ec; padding: 3px 0 0 196px; }
.taskbar i { display: block; width: 26px; height: 3px; background: #f7f7f7; }
```
